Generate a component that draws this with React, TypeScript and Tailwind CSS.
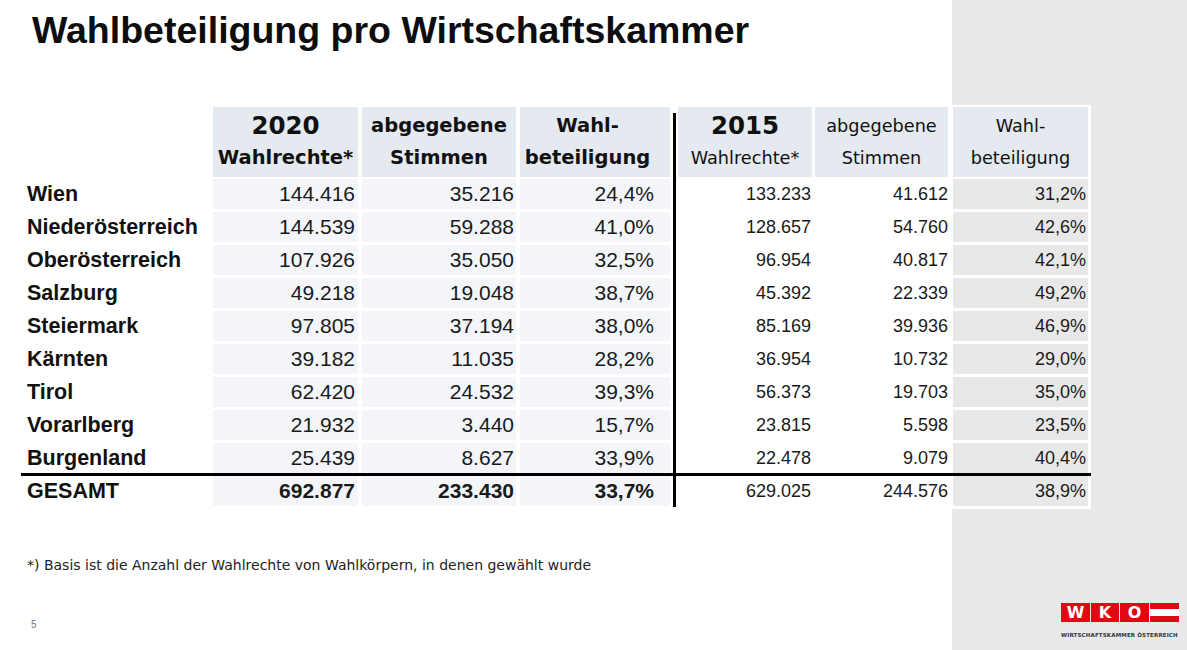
import React from "react";

const ARIAL = "font-['Liberation_Sans',Arial,sans-serif]";
const DEJA = "font-['DejaVu_Sans',sans-serif]";

type Row = { name: string; v: string[] };

const rows: Row[] = [
  { name: "Wien", v: ["144.416", "35.216", "24,4%", "133.233", "41.612", "31,2%"] },
  { name: "Niederösterreich", v: ["144.539", "59.288", "41,0%", "128.657", "54.760", "42,6%"] },
  { name: "Oberösterreich", v: ["107.926", "35.050", "32,5%", "96.954", "40.817", "42,1%"] },
  { name: "Salzburg", v: ["49.218", "19.048", "38,7%", "45.392", "22.339", "49,2%"] },
  { name: "Steiermark", v: ["97.805", "37.194", "38,0%", "85.169", "39.936", "46,9%"] },
  { name: "Kärnten", v: ["39.182", "11.035", "28,2%", "36.954", "10.732", "29,0%"] },
  { name: "Tirol", v: ["62.420", "24.532", "39,3%", "56.373", "19.703", "35,0%"] },
  { name: "Vorarlberg", v: ["21.932", "3.440", "15,7%", "23.815", "5.598", "23,5%"] },
  { name: "Burgenland", v: ["25.439", "8.627", "33,9%", "22.478", "9.079", "40,4%"] },
];

const total: Row = { name: "GESAMT", v: ["692.877", "233.430", "33,7%", "629.025", "244.576", "38,9%"] };

function DataRow({ r, bold, h }: { r: Row; bold?: boolean; h: string }) {
  const w = bold ? "font-bold" : "font-normal";
  return (
    <div className={`flex items-start ${h}`}>
      <div className={`w-[192px] h-[30px] pl-[6px] flex items-center text-[21.5px] font-bold text-[#111] ${ARIAL}`}>
        {r.name}
      </div>
      <div className={`w-[145px] h-[30px] bg-[#f3f5f9] flex items-center justify-end pr-[3px] text-[21px] ${w} text-[#1a1a1a] ${ARIAL}`}>
        {r.v[0]}
      </div>
      <div className={`ml-[4px] w-[154px] h-[30px] bg-[#f3f5f9] flex items-center justify-end pr-[2px] text-[21px] ${w} text-[#1a1a1a] ${ARIAL}`}>
        {r.v[1]}
      </div>
      <div className={`ml-[4px] w-[150px] h-[30px] bg-[#f3f5f9] flex items-center justify-end pr-[16px] text-[21px] ${w} text-[#1a1a1a] ${ARIAL}`}>
        {r.v[2]}
      </div>
      <div className="ml-[3px] w-[3px] self-stretch bg-black" />
      <div className={`ml-[2px] w-[134px] h-[30px] flex items-center justify-end pr-[1px] text-[18px] text-[#1a1a1a] ${ARIAL}`}>
        {r.v[3]}
      </div>
      <div className={`ml-[3px] w-[133px] h-[30px] flex items-center justify-end pr-[0px] text-[18px] text-[#1a1a1a] ${ARIAL}`}>
        {r.v[4]}
      </div>
      <div className={`ml-[5px] w-[135px] h-[30px] bg-[#e8e8e8] flex items-center justify-end pr-[2px] text-[18px] text-[#1a1a1a] ${ARIAL}`}>
        {r.v[5]}
      </div>
    </div>
  );
}

function Head({ a, b, big, bold, w, ml, pr }: { a: string; b: string; big?: boolean; bold: boolean; w: string; ml: string; pr?: string }) {
  return (
    <div className={`${ml} ${w} h-[70px] bg-[#e5e9f0] flex flex-col justify-center items-center ${pr ?? ""} text-[#111] ${DEJA}`}>
      <div className={`h-[32px] leading-[32px] ${big ? "text-[24.5px] font-bold" : bold ? "text-[19.5px] font-bold" : "text-[17.7px]"}`}>{a}</div>
      <div className={`h-[32px] leading-[32px] ${bold ? "text-[19.5px] font-bold" : "text-[17.7px]"}`}>{b}</div>
    </div>
  );
}

function WkoLogo() {
  const box = "bg-[#e30613] flex items-center justify-center text-white text-[16px] font-bold font-['DejaVu_Sans',sans-serif] leading-none";
  return (
    <div className="w-[117px] flex flex-col items-start">
      <div className="flex h-[19px] items-stretch">
        <div className={`w-[29px] ${box}`}>W</div>
        <div className={`ml-[1px] w-[28px] ${box}`}>K</div>
        <div className={`ml-[1px] w-[29px] ${box}`}>O</div>
        <div className="ml-[1px] w-[29px] flex flex-col">
          <div className="h-[6px] bg-[#e30613]" />
          <div className="h-[7px] bg-white" />
          <div className="h-[6px] bg-[#e30613]" />
        </div>
      </div>
      <div className="mt-[10px] text-[5.5px] leading-[7px] font-bold tracking-[0.15px] text-[#333] font-['DejaVu_Sans',sans-serif] whitespace-nowrap">
        WIRTSCHAFTSKAMMER ÖSTERREICH
      </div>
    </div>
  );
}

export default function App() {
  return (
    <div className="w-[1187px] h-[650px] overflow-hidden flex flex-col bg-[linear-gradient(to_right,#ffffff_952px,#e9e9e9_952px)]">
      <h1 className={`pl-[32px] pt-[12px] h-[49px] text-[37.5px] leading-[37px] font-bold text-[#0d0d0d] whitespace-nowrap ${ARIAL}`}>
        Wahlbeteiligung pro Wirtschaftskammer
      </h1>
      <div className="mt-[56px] ml-[21px] w-[1070px] bg-white pt-[2px] pb-[2px]">
        <div className="flex items-start h-[72px]">
          <div className="w-[192px]" />
          <Head a="2020" b="Wahlrechte*" big bold w="w-[145px]" ml="" />
          <Head a="abgegebene" b="Stimmen" bold w="w-[154px]" ml="ml-[4px]" />
          <Head a="Wahl-" b="beteiligung" bold w="w-[150px]" ml="ml-[4px]" pr="pr-[15px]" />
          <div className="ml-[3px] mt-[6px] w-[3px] self-stretch bg-black" />
          <Head a="2015" b="Wahlrechte*" big bold={false} w="w-[134px]" ml="ml-[2px]" />
          <Head a="abgegebene" b="Stimmen" bold={false} w="w-[133px]" ml="ml-[3px]" />
          <Head a="Wahl-" b="beteiligung" bold={false} w="w-[135px]" ml="ml-[5px]" />
        </div>
        {rows.map((r, i) => (
          <DataRow key={r.name} r={r} h={i === rows.length - 1 ? "h-[30px]" : "h-[33px]"} />
        ))}
        <div className="h-[3px] bg-black" />
        <DataRow r={total} bold h="h-[31px]" />
      </div>
      <div className={`mt-[46px] pl-[27px] text-[14px] leading-[20px] text-[#222] ${DEJA}`}>
        *) Basis ist die Anzahl der Wahlrechte von Wahlkörpern, in denen gewählt wurde
      </div>
      <div className="mt-auto mb-[11px] flex items-end justify-between pl-[31px] pr-[9px]">
        <div className={`mb-[9px] text-[10px] leading-[10px] text-[#777] ${ARIAL}`}>5</div>
        <WkoLogo />
      </div>
    </div>
  );
}
